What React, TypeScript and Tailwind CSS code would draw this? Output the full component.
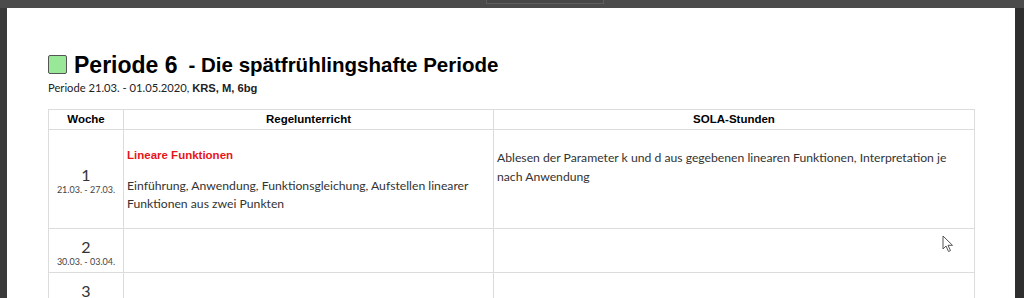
import React from 'react';

const weeks = [
  {
    nr: 1,
    range: '21.03. - 27.03.',
    topic: 'Lineare Funktionen',
    regel: 'Einführung, Anwendung, Funktionsgleichung, Aufstellen linearer Funktionen aus zwei Punkten',
    sola: 'Ablesen der Parameter k und d aus gegebenen linearen Funktionen, Interpretation je nach Anwendung',
  },
  { nr: 2, range: '30.03. - 03.04.', topic: '', regel: '', sola: '' },
  { nr: 3, range: '', topic: '', regel: '', sola: '' },
];

const Cursor = () => (
  <svg width="13" height="19" viewBox="0 0 13 19" className="absolute left-[935px] top-[227px]">
    <path d="M1 1 L1 14 L4 11 L6.5 16.5 L8.5 15.6 L6 10.3 L10.5 10.3 Z" fill="#fff" stroke="#555" strokeWidth="1" strokeLinejoin="round" />
  </svg>
);

const App = () => {
  return (
    <div className="w-[1024px] h-[298px] bg-[#4b4b4b] overflow-hidden flex flex-col">
      <div className="h-[8px] shrink-0 pl-[486px]">
        <div className="w-[118px] h-[4px] border border-t-0 border-[#5e5e5e] bg-[#474747]" />
      </div>
      <div className="flex flex-1 min-h-0">
        <div className="w-[7px] bg-[#3a3a3a]" />
        <div className="flex-1 bg-white relative pl-[41px] pr-[40px] pt-[43px] font-['Lato',sans-serif] text-[#333]">
          <div className="flex items-center font-['Liberation_Sans',sans-serif] font-bold text-black">
            <div className="w-[19px] h-[19px] bg-[#98e898] border border-[#555] rounded-[2px] mr-[7px]" />
            <span className="text-[23px] leading-[26px]">Periode 6</span>
            <span className="text-[20.5px] leading-[26px] ml-[11px] mt-[1px]">- Die spätfrühlingshafte Periode</span>
          </div>
          <p className="text-[11.2px] leading-[14px] mt-[3px] text-[#222]">
            Periode 21.03. - 01.05.2020, <b className="font-['Liberation_Sans',sans-serif]">KRS, M, 6bg</b>
          </p>
          <table className="mt-[14px] w-[927px] border-collapse text-[12.2px]">
            <thead>
              <tr className="h-[20px] font-['Liberation_Sans',sans-serif] text-[11.5px] text-black">
                <th className="w-[75px] border-[1.5px] border-[#dcdcdc] font-bold">Woche</th>
                <th className="w-[370px] border-[1.5px] border-[#dcdcdc] font-bold">Regelunterricht</th>
                <th className="border-[1.5px] border-[#dcdcdc] font-bold">SOLA-Stunden</th>
              </tr>
            </thead>
            <tbody>
              {weeks.map((w) => (
                <tr key={w.nr} className={w.nr === 1 ? 'h-[99px]' : 'h-[44px]'}>
                  <td className="border-[1.5px] border-[#dcdcdc] text-center align-middle pt-[4px]">
                    <div className="text-[16px] leading-[18px]">{w.nr}</div>
                    <div className="text-[9px] leading-[12px] min-h-[12px] text-[#444]">{w.range}</div>
                  </td>
                  <td className="border-[1.5px] border-[#dcdcdc] align-top px-[3px] pt-[17px]">
                    {w.topic && (
                      <p className="font-['Liberation_Sans',sans-serif] font-bold text-[11.5px] text-[#e8151b] leading-[16px] mb-[14px]">
                        {w.topic}
                      </p>
                    )}
                    {w.regel && <p className="leading-[18px]">{w.regel}</p>}
                  </td>
                  <td className="border-[1.5px] border-[#dcdcdc] align-top pl-[3px] pr-[8px] pt-[18px]">
                    {w.sola && <p className="leading-[19px]">{w.sola}</p>}
                  </td>
                </tr>
              ))}
            </tbody>
          </table>
          <Cursor />
        </div>
        <div className="w-[9px] bg-[#2e2e2e]" />
      </div>
    </div>
  );
};

export default App;
